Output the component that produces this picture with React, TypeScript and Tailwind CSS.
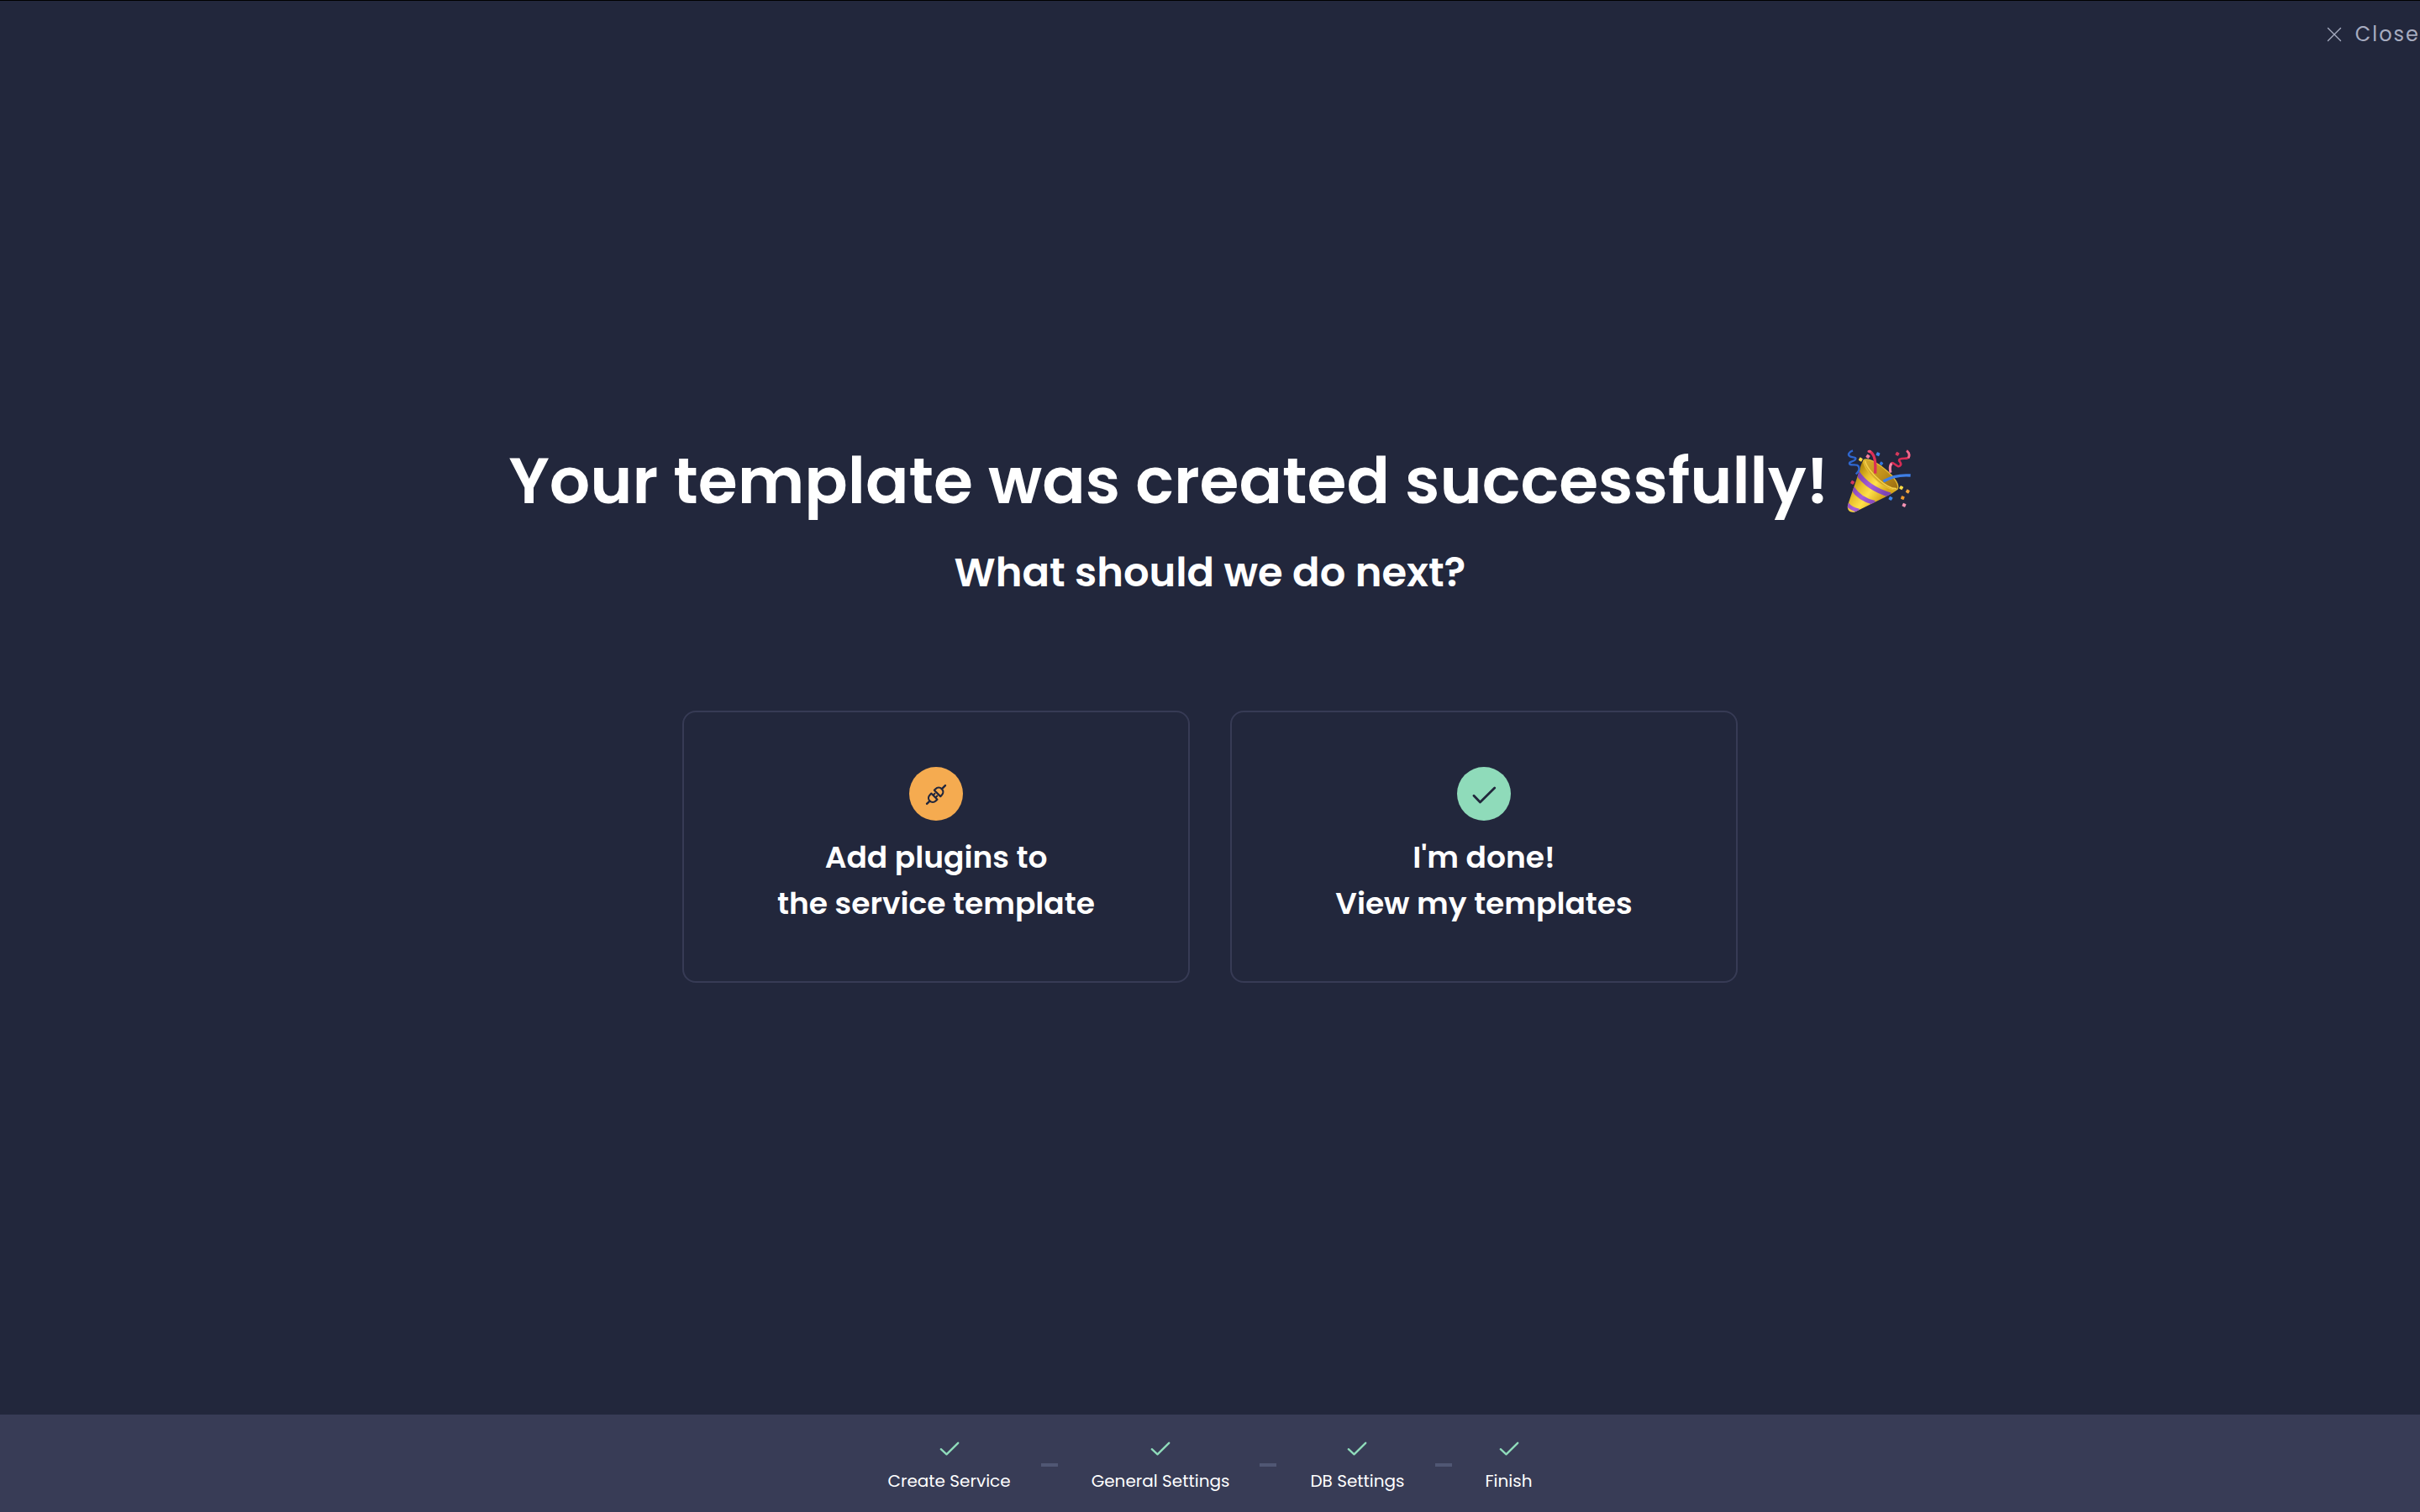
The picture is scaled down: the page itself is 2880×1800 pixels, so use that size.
import React from "react";

type IconProps = { className?: string };

function CheckIcon({ className }: IconProps) {
  return (
    <svg viewBox="0 0 24 17" fill="none" className={className} aria-hidden="true">
      <path d="M1.8 9.2 8.5 15.3 22.2 1.8" stroke="currentColor" strokeWidth="2.4" strokeLinecap="round" strokeLinejoin="round" />
    </svg>
  );
}

function BoldCheckIcon({ className }: IconProps) {
  return (
    <svg viewBox="0 0 64 64" fill="none" className={className} aria-hidden="true">
      <path d="M20 34.3 27.5 42 44.7 25" stroke="currentColor" strokeWidth="2.8" strokeLinecap="round" strokeLinejoin="round" />
    </svg>
  );
}

function PlugIcon({ className }: IconProps) {
  return (
    <svg viewBox="0 0 64 64" fill="none" className={className} aria-hidden="true">
      <g transform="rotate(-45 32 33)" stroke="currentColor" strokeWidth="2.2" strokeLinecap="round" strokeLinejoin="round">
        <path d="M16.5 33h4.5" strokeWidth="2.4" />
        <path d="M29 28h-2.6a5 5 0 0 0 0 10h2.6z" />
        <path d="M29.4 31h2.4M29.4 35h2.4" />
        <path d="M34.2 27.8h2.2a5.2 5.2 0 0 1 0 10.4h-2.2z" />
        <path d="M42.2 33h5.3" strokeWidth="2.4" />
      </g>
    </svg>
  );
}

function CloseIcon({ className }: IconProps) {
  return (
    <svg viewBox="0 0 18 18" fill="none" className={className} aria-hidden="true">
      <path d="M1.5 1.5l15 15M16.5 1.5l-15 15" stroke="currentColor" strokeWidth="1.4" strokeLinecap="round" />
    </svg>
  );
}

function PartyPopper({ className }: IconProps) {
  return (
    <svg viewBox="48 64 234 234" className={className} role="img" aria-label="Party popper">
      <defs>
        <linearGradient id="cone" x1="70" y1="180" x2="170" y2="250" gradientUnits="userSpaceOnUse">
          <stop offset="0" stopColor="#b98e10" />
          <stop offset="0.3" stopColor="#e8c02c" />
          <stop offset="0.6" stopColor="#ffe14a" />
          <stop offset="1" stopColor="#d6a51c" />
        </linearGradient>
        <linearGradient id="mouth" x1="120" y1="110" x2="230" y2="210" gradientUnits="userSpaceOnUse">
          <stop offset="0" stopColor="#d3a82a" />
          <stop offset="0.5" stopColor="#c0901a" />
          <stop offset="1" stopColor="#9a6c10" />
        </linearGradient>
        <linearGradient id="band" x1="70" y1="180" x2="170" y2="250" gradientUnits="userSpaceOnUse">
          <stop offset="0" stopColor="#7a3fa8" />
          <stop offset="0.5" stopColor="#a65ed8" />
          <stop offset="1" stopColor="#7c44b4" />
        </linearGradient>
        <clipPath id="coneClip">
          <path d="M112 104C104 110 98 136 92 154L54 266C50 284 62 294 78 291L186 238C208 226 226 218 232 208Z" />
        </clipPath>
      </defs>
      <path d="M112 104C104 110 98 136 92 154L54 266C50 284 62 294 78 291L186 238C208 226 226 218 232 208Z" fill="url(#cone)" />
      <g clipPath="url(#coneClip)" fill="none" stroke="url(#band)">
        <path d="M88 150C112 186 150 214 206 230" strokeWidth="17" />
        <path d="M70 204C86 230 114 250 150 258" strokeWidth="16" />
        <path d="M50 260C60 274 74 282 94 286" strokeWidth="14" />
      </g>
      <path d="M112 104C130 98 166 118 196 146C224 170 238 196 232 208C222 218 186 204 156 176C126 150 104 116 112 104Z" fill="url(#mouth)" stroke="#e6bd34" strokeWidth="4" />
      <path d="M116 108C118 124 140 154 166 176C190 197 214 208 228 207" fill="none" stroke="#f3cf4a" strokeWidth="5" />
      <path d="M130 73C152 82 154 112 152 153" fill="none" stroke="#dc2f57" strokeWidth="10" />
      <ellipse cx="131" cy="74" rx="7" ry="5" fill="#f0527a" />
      <path d="M181 181C208 165 240 157 278 160" fill="none" stroke="#3f7fe6" strokeWidth="10" />
      <path d="M206 149C204 128 208 112 216 116C228 122 234 134 242 124C250 114 230 108 240 102C252 96 270 104 273 92C275 84 270 76 264 71" fill="none" stroke="#d92c55" strokeWidth="8" strokeLinejoin="round" />
      <path d="M207 150C203 134 206 122 211 117" fill="none" stroke="#f58aa8" strokeWidth="9" />
      <path d="M270 98C276 88 272 78 265 72" fill="none" stroke="#ee6a8e" strokeWidth="8" />
      <path d="M72 71C58 76 52 86 62 92C72 97 88 94 80 104C74 112 58 108 60 118C64 128 86 116 93 128C97 138 92 148 83 155" fill="none" stroke="#2f67cf" strokeWidth="7" strokeLinejoin="round" />
      <g>
        <rect x="94" y="97" width="12" height="12" rx="2" fill="#ffdc45" transform="rotate(30 100 103)" />
        <rect x="120" y="86" width="12" height="12" rx="2" fill="#f37fa0" transform="rotate(35 126 92)" />
        <rect x="156" y="78" width="12" height="12" rx="2" fill="#3e84ec" transform="rotate(25 162 84)" />
        <rect x="168" y="112" width="11" height="11" rx="2" fill="#3478e0" transform="rotate(35 174 118)" />
        <rect x="225" y="77" width="12" height="12" rx="2" fill="#d43a5c" transform="rotate(30 231 83)" />
        <rect x="65" y="179" width="12" height="12" rx="2" fill="#d3355a" transform="rotate(30 71 185)" />
        <rect x="239" y="198" width="12" height="12" rx="2" fill="#ffdc45" transform="rotate(30 245 204)" />
        <rect x="262" y="211" width="12" height="12" rx="2" fill="#f2a43c" transform="rotate(30 268 217)" />
        <rect x="244" y="234" width="12" height="12" rx="2" fill="#ee9a2c" transform="rotate(20 250 240)" />
        <rect x="201" y="236" width="12" height="12" rx="2" fill="#3b86f2" transform="rotate(30 207 242)" />
        <rect x="249" y="260" width="12" height="12" rx="2" fill="#f592b4" transform="rotate(25 255 266)" />
      </g>
    </svg>
  );
}

type ChoiceProps = { icon: React.ReactNode; lines: [string, string] };

function ChoiceCard({ icon, lines }: ChoiceProps) {
  return (
    <button
      type="button"
      className="flex flex-1 cursor-pointer flex-col items-center rounded-2xl border-2 border-[#373b55] px-8 py-[65px] text-[36px] leading-[55px] font-semibold"
    >
      {icon}
      <span className="mt-4">{lines[0]}</span>
      <span>{lines[1]}</span>
    </button>
  );
}

const steps = ["Create Service", "General Settings", "DB Settings", "Finish"];

export default function App() {
  return (
    <div className="flex min-h-screen flex-col border-t border-black bg-[#22273c] font-['Poppins','Inter',sans-serif] text-white">
      <header className="flex h-20 items-center justify-end">
        <button type="button" className="flex cursor-pointer items-center gap-4 text-2xl tracking-[2px] text-[#a7acc0]">
          <CloseIcon className="size-[18px]" />
          Close
        </button>
      </header>

      <main className="flex flex-1 flex-col items-center justify-center px-8 pb-20">
        <h1 className="flex items-center gap-5 text-center text-[76px] leading-[114px] font-semibold">
          Your template was created successfully!
          <PartyPopper className="size-[78px] shrink-0" />
        </h1>
        <h2 className="mt-4 text-center text-5xl leading-[72px] font-semibold">What should we do next?</h2>
        <div className="mt-32 flex w-full max-w-[1256px] gap-12">
          <ChoiceCard
            icon={<PlugIcon className="size-16 rounded-full bg-[#f5ab50] text-[#22273c]" />}
            lines={["Add plugins to", "the service template"]}
          />
          <ChoiceCard
            icon={<BoldCheckIcon className="size-16 rounded-full bg-[#8fdbba] text-[#22273c]" />}
            lines={["I'm done!", "View my templates"]}
          />
        </div>
      </main>

      <footer className="bg-[#383c56]">
        <ol className="flex h-[116px] items-center justify-center gap-9 pt-1">
          {steps.map((step, i) => (
            <React.Fragment key={step}>
              {i > 0 && <li aria-hidden="true" className="mr-1 h-1 w-5 bg-[#505774]" />}
              <li className="flex flex-col items-center gap-4 pt-1 text-xl">
                <CheckIcon className="h-[17px] w-6 text-[#8fdbba]" />
                {step}
              </li>
            </React.Fragment>
          ))}
        </ol>
      </footer>
    </div>
  );
}
